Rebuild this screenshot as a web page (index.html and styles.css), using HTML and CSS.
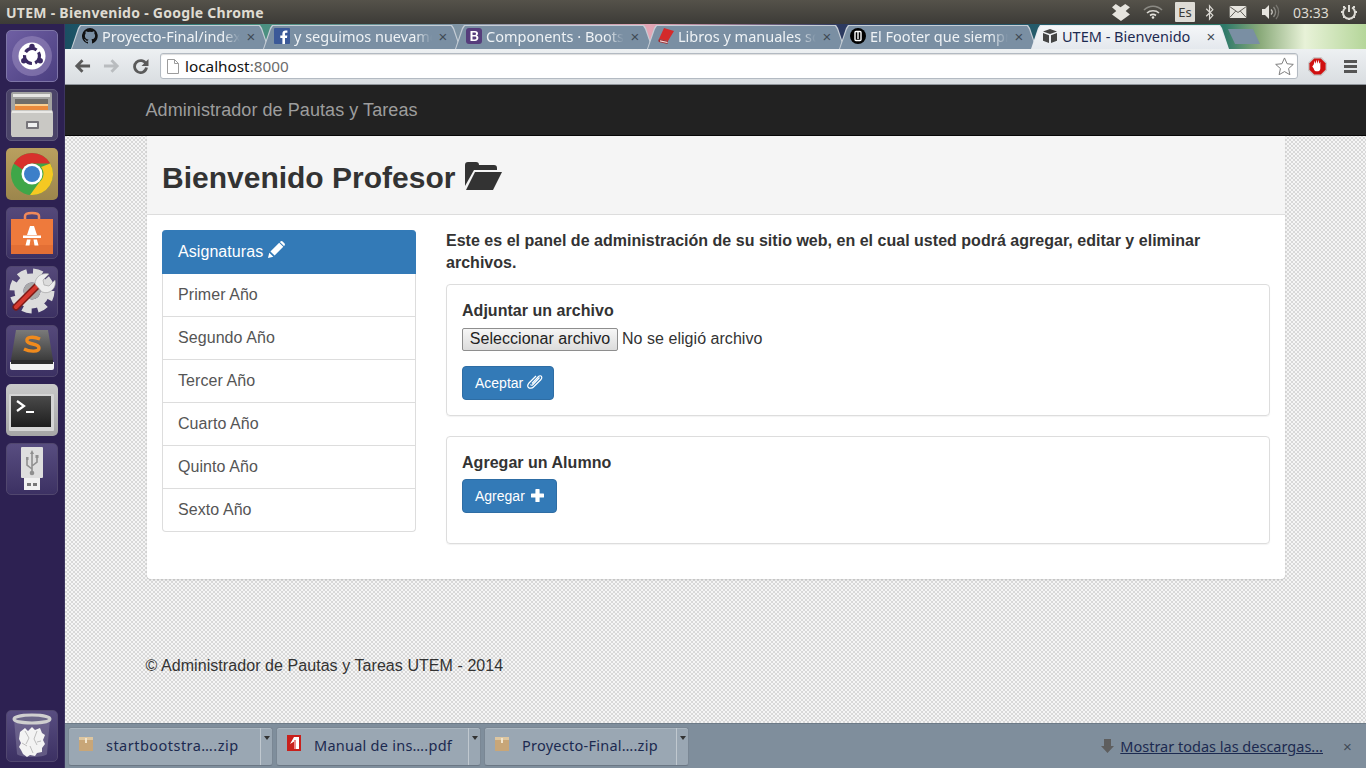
FILE: index.html
```html
<!DOCTYPE html>
<html lang="es">
<head>
<meta charset="utf-8">
<title>UTEM - Bienvenido</title>
<link rel="stylesheet" href="styles.css">
</head>
<body>
<header class="panel-top">
  <div class="win-title">UTEM - Bienvenido - Google Chrome</div>
  <div class="indicators">
    <svg class="ind ind-dropbox" viewBox="0 0 20 18"><path fill="#e6e4de" d="M5 0l5 3.500L15 0l5 3.500-4.500 4 4.500 3.500-4 3-5.500 4-5.500-4-4-3 4.500-3.500-4.500-4z"/></svg>
    <svg class="ind ind-wifi" viewBox="0 0 20 14"><g fill="none" stroke-width="1.600"><path stroke="#8b8a84" d="M1 5c5-5 13-5 18 0"/><path stroke="#d8d6d0" d="M4 8c3-3 9-3 12 0"/><path stroke="#e6e4de" d="M7 10.500c2-1.500 4-1.500 6 0"/></g><circle cx="10" cy="12.500" r="1.300" fill="#e6e4de"/></svg>
    <span class="ind-es">Es</span>
    <svg class="ind ind-bt" viewBox="0 0 10 18"><path fill="none" stroke="#dcdad4" stroke-width="1.300" d="M1 5l7 7-3.500 4V2L8 6l-7 7"/></svg>
    <svg class="ind ind-mail" viewBox="0 0 18 13"><rect width="18" height="13" rx="1" fill="#e6e4de"/><path fill="none" stroke="#55534d" d="M0.500 1l8.500 6 8.500-6M0.500 12l6-6.500M17.500 12l-6-6.500"/></svg>
    <svg class="ind ind-vol" viewBox="0 0 20 16"><path fill="#e6e4de" d="M1 5h3l4-4v14l-4-4H1z"/><g fill="none" stroke-width="1.300"><path stroke="#c8c6c0" d="M10 5.500c1.500 1.500 1.500 3.500 0 5"/><path stroke="#8b8a84" d="M12.500 3c2.500 3 2.500 7 0 10"/><path stroke="#77756f" d="M15 1c3.500 4 3.500 10 0 14"/></g></svg>
    <span class="clock">03:33</span>
    <svg class="ind ind-power" viewBox="0 0 16 16"><g fill="none" stroke="#dcdad4" stroke-width="2"><path d="M5 3.500a6 6 0 1 0 6 0"/><path d="M8 1v7"/></g><path fill="#dcdad4" d="M2 2h2v2H2zM12 2h2v2h-2zM0 7h2v2H0zM14 7h2v2h-2zM2 12h2v2H2zM12 12h2v2h-2zM7 14h2v2H7z"/></svg>
  </div>
</header>
<div class="desktop">
  <nav class="launcher">
    <div class="tile tile-dash"><svg viewBox="0 0 52 52"><circle cx="26" cy="26" r="20" fill="#9a8dc0" opacity=".55"/><circle cx="26" cy="26" r="13.500" fill="#fff"/><circle cx="26" cy="26" r="7.500" fill="none" stroke="#3b2a63" stroke-width="3.200" stroke-dasharray="12.500 3.200" transform="rotate(-30 26 26)"/><g fill="#3b2a63"><circle cx="26" cy="16.500" r="2.700"/><circle cx="17.800" cy="30.700" r="2.700"/><circle cx="34.200" cy="30.700" r="2.700"/></g></svg></div>
    <div class="tile tile-files"><svg viewBox="0 0 52 52"><rect x="5" y="3" width="41" height="20" rx="2" fill="#a3a3a1"/><rect x="7" y="5" width="37" height="3" fill="#e6e5e2"/><rect x="9" y="10" width="33" height="12" fill="#6f6d69"/><rect x="9" y="15" width="33" height="7" fill="#e98a3c"/><rect x="9" y="15" width="33" height="2" fill="#f7cf92"/><path fill="#c9c8c4" d="M6 21h40l1 2v23l-1 2H6l-1-2V23z"/><rect x="6" y="22" width="40" height="2" fill="#e9e8e5"/><rect x="20" y="32" width="13" height="8" rx="1" fill="#77757a"/><rect x="22" y="34" width="9" height="4" fill="#f1f1f1"/></svg></div>
    <div class="tile tile-chrome"><svg viewBox="0 0 52 52"><circle cx="26" cy="26" r="21" fill="#3fa648"/><path fill="#d8312c" d="M7.800 15.500A21 21 0 0 1 44.200 15.500H26a10.500 10.500 0 0 0-9.500 6z"/><path fill="#f5c822" d="M44.200 15.500A21 21 0 0 1 24 47l9.500-13a10.500 10.500 0 0 0 1.500-15z"/><circle cx="26" cy="26" r="10.500" fill="#fff"/><circle cx="26" cy="26" r="8" fill="#3d7fc9"/></svg></div>
    <div class="tile tile-plain"><svg viewBox="0 0 52 52"><path fill="none" stroke="#f0895a" stroke-width="2.500" d="M19 15v-6c0-4 14-4 14 0v6"/><path fill="#ee7a3c" d="M5 12h42v35H5z"/><rect x="5" y="38" width="42" height="9" fill="#e36f35"/><path fill="#fff" d="M24 19h4l3 9h-10zM17 28.500h18v2.500H17zM21 32.500h3.500l-1 6h-4zM27.500 32.500H31l1.500 6h-4z"/></svg></div>
    <div class="tile tile-plain"><svg viewBox="0 0 52 52"><circle cx="26" cy="25" r="19" fill="none" stroke="#dcdcdc" stroke-width="7" stroke-dasharray="9 6"/><circle cx="26" cy="25" r="13" fill="none" stroke="#dcdcdc" stroke-width="9"/><circle cx="26" cy="25" r="8.500" fill="#a9a9a9"/><path fill="none" stroke="#7d1a16" stroke-width="7" stroke-linecap="round" d="M10 41L32 19"/><path fill="none" stroke="#d5392f" stroke-width="4" stroke-linecap="round" d="M10 41L32 19"/><path fill="#ececec" stroke="#9a9a9a" stroke-width=".6" d="M29 18c0-7 7-12 14-10l-6 6 1 5 5 1 6-6c2 8-5 15-13 12z"/></svg></div>
    <div class="tile tile-plain"><svg viewBox="0 0 52 52"><defs><linearGradient id="subl" x1="0" y1="0" x2="0" y2="1"><stop offset="0" stop-color="#7a7a7a"/><stop offset="1" stop-color="#3c3c3c"/></linearGradient></defs><path fill="url(#subl)" d="M10 5h32l5 30H5z"/><path fill="#f2f2f2" d="M4 37h44v6q0 2-2 2H6q-2 0-2-2z"/><rect x="5" y="35" width="42" height="4" fill="#2d2d2d"/><path fill="none" stroke="#f08a1d" stroke-width="3.400" d="M34 14c-7-3-14-2-13 2 1 4 12 2 12 7 0 4-9 4-15 1"/></svg></div>
    <div class="tile tile-term"><svg viewBox="0 0 52 52"><defs><linearGradient id="term" x1="0" y1="0" x2="0" y2="1"><stop offset="0" stop-color="#4a4a4a"/><stop offset="1" stop-color="#1e1e1e"/></linearGradient></defs><rect x="3" y="10" width="45" height="37" rx="1" fill="#d5d5d5"/><rect x="5" y="12" width="40" height="31" fill="url(#term)"/><path fill="none" stroke="#fff" stroke-width="2.200" d="M11 17l7 5-7 5"/><rect x="20" y="27" width="8" height="2" fill="#fff"/></svg></div>
    <div class="tile tile-usb"><svg viewBox="0 0 52 52"><rect x="15" y="4" width="22" height="31" rx="1" fill="#dedede"/><rect x="18" y="35" width="16" height="12" fill="#f1f1f1"/><rect x="21" y="40" width="4" height="3" fill="#777"/><rect x="27" y="40" width="4" height="3" fill="#777"/><path fill="none" stroke="#8f8f8f" stroke-width="1.600" d="M26 9v19M26 26l-5-4v-5M26 23l5-4v-4"/><circle cx="26" cy="30" r="2.300" fill="#8f8f8f"/><path fill="#8f8f8f" d="M26 7l2 4h-4zM20 14h2.500v3H20zM29.500 12h3v3h-3z"/></svg></div>
    <div class="launcher-gap"></div>
    <div class="tile tile-usb"><svg viewBox="0 0 52 52"><path fill="#8d88a6" d="M8 9h36l-3 35c-2 4-28 4-30 0z" opacity=".45"/><ellipse cx="26" cy="9" rx="18" ry="4" fill="#6b6688" stroke="#cfcfcf" stroke-width="3"/><path fill="#f3f3f3" d="M14 22l5-4 3 3 4-4 3 3 5-2 2 5 3 2-2 5 2 4-3 4 0 4-5 1-2 3-5-1-3 2-4-3-2-4-2-3 2-4-2-4z"/><path fill="none" stroke="#bdbdbd" d="M19 21l4 7-3 6M31 21l-3 8 3 6M16 33l5 3M35 31l-4 1M24 36l3 7"/></svg></div>
  </nav>
  <div class="browser">
    <div class="tabstrip">
      <div class="tab"><svg class="fav" viewBox="0 0 16 16"><path fill="#111" d="M8 0a8 8 0 0 0-2.500 15.600c.4.100.5-.2.500-.4v-1.400c-2.200.5-2.700-1-2.700-1-.4-.9-.9-1.200-.9-1.200-.7-.5.100-.5.100-.5.800.1 1.200.8 1.200.8.700 1.200 1.900.9 2.300.7.100-.5.300-.9.500-1.100-1.800-.2-3.600-.9-3.600-4 0-.9.300-1.600.8-2.100-.1-.2-.4-1 .1-2.100 0 0 .7-.2 2.200.8a7.600 7.600 0 0 1 4 0c1.500-1 2.200-.8 2.200-.8.400 1.100.2 1.900.1 2.100.5.600.8 1.300.8 2.100 0 3.100-1.900 3.700-3.700 3.900.3.300.6.800.6 1.500v2.200c0 .2.100.5.500.4A8 8 0 0 0 8 0z"/></svg><span class="tab-label">Proyecto-Final/index</span><span class="tab-x">×</span></div>
      <div class="tab"><svg class="fav" viewBox="0 0 16 16"><rect width="16" height="16" rx="1" fill="#3b5998"/><path fill="#fff" d="M11 16v-6h2l.3-2.500H11V6c0-.7.300-1.200 1.200-1.200h1.200V2.600C13.200 2.500 12.500 2.500 11.600 2.500 9.700 2.500 8.400 3.600 8.400 5.700v1.800H6.300V10h2.100v6z"/></svg><span class="tab-label">y seguimos nuevame</span><span class="tab-x">×</span></div>
      <div class="tab"><svg class="fav" viewBox="0 0 16 16"><rect width="16" height="16" rx="3" fill="#563d7c"/><path fill="#fff" d="M4.500 3H9c2 0 3 1 3 2.400 0 1-.6 1.800-1.500 2.100 1.200.2 1.900 1.100 1.900 2.300C12.400 11.800 11 13 9 13H4.500zM6.500 4.600v2.400h2.100c.9 0 1.400-.4 1.400-1.200s-.5-1.200-1.400-1.200zM6.500 8.500v2.900h2.400c1 0 1.500-.5 1.500-1.400s-.5-1.500-1.500-1.500z"/></svg><span class="tab-label">Components · Boots</span><span class="tab-x">×</span></div>
      <div class="tab"><svg class="fav" viewBox="0 0 16 16"><path fill="#d42a2a" d="M6 0l10 3-6 10-9-2z"/><path fill="#a81c1c" d="M1 11l9 2-.5 3L1 14c-1-1-.8-2 0-3z" opacity=".85"/><path fill="#f4d8d8" d="M2 12.300l7.600 1.800-.3 1-7.300-1.700z"/></svg><span class="tab-label">Libros y manuales so</span><span class="tab-x">×</span></div>
      <div class="tab"><svg class="fav" viewBox="0 0 16 16"><circle cx="8" cy="8" r="8" fill="#000"/><rect x="5" y="3.500" width="6" height="9" rx="1" fill="none" stroke="#fff" stroke-width="1.400"/><path stroke="#fff" stroke-width="1.400" d="M8 3v8"/></svg><span class="tab-label">El Footer que siempr</span><span class="tab-x">×</span></div>
      <div class="tab tab-active"><svg class="fav" viewBox="0 0 16 16"><path fill="#444" d="M8 1l7 2.500L8 6 1 3.500zM1 5l6 2.200V15l-6-2.200zM15 5L9 7.200V15l6-2.200z"/></svg><span class="tab-label">UTEM - Bienvenido</span><span class="tab-x">×</span></div>
      <div class="tab-new"></div>
    </div>
    <div class="toolbar">
      <svg class="tool tool-back" viewBox="0 0 18 16"><path fill="none" stroke="#5a5a5a" stroke-width="3" d="M17 8H4M9 2L3 8l6 6"/></svg>
      <svg class="tool tool-fwd" viewBox="0 0 18 16"><path fill="none" stroke="#b9bcbf" stroke-width="3" d="M1 8h13M9 2l6 6-6 6"/></svg>
      <svg class="tool tool-reload" viewBox="0 0 16 16"><path fill="none" stroke="#5a5a5a" stroke-width="2.800" d="M13.500 6A6 6 0 1 0 14 9.500"/><path fill="#5a5a5a" d="M16 1v7H9z"/></svg>
      <div class="omnibox">
        <svg class="page-ic" viewBox="0 0 12 15"><path fill="#fff" stroke="#9c9c9c" d="M.5.500h7l4 4v10H.500z"/><path fill="none" stroke="#9c9c9c" d="M7.500.500v4h4"/></svg>
        <span class="url"><b>localhost</b>:8000</span>
        <svg class="star" viewBox="0 0 20 19"><path fill="#fff" stroke="#777" d="M10 1l2.700 6.100 6.600.7-5 4.400 1.400 6.500-5.700-3.300-5.700 3.300 1.400-6.500-5-4.400 6.600-.7z"/></svg>
      </div>
      <svg class="stop" viewBox="0 0 20 20"><path fill="#c9c9c9" d="M6 0h8l6 6v8l-6 6H6l-6-6V6z"/><path fill="#d01010" d="M6.500 1.500h7l5 5v7l-5 5h-7l-5-5v-7z"/><path fill="#fff" d="M6 8l1-4 1 3 1-4 1 4 1-4 1 4 1-2v7c0 2-1.500 3-3.500 3S6.500 14 6 12l-1.500-2z"/></svg>
      <div class="burger"><i></i><i></i><i></i></div>
    </div>
    <main class="page">
      <div class="navbar"><div class="container"><a class="brand">Administrador de Pautas y Tareas</a></div></div>
      <div class="container">
        <section class="card">
          <div class="card-head">
            <h1>Bienvenido Profesor <svg class="ic-folder" viewBox="0 0 37 28"><path fill="#333" d="M0 3q0-3 3-3h8q3 0 3 3h15q3 0 3 3v2H9L0 24z"/><path fill="#333" d="M10 10h27L28 28H1z"/></svg></h1>
          </div>
          <div class="card-body">
            <div class="list">
              <a class="list-item is-active">Asignaturas <svg class="ic-pencil" viewBox="0 0 16 16"><path fill="#fff" d="M0 16l1.200-5 3.800 3.800zM2.300 9.800L10.500 1.600l3.900 3.900-8.200 8.200zM11.500.6c.8-.8 1.800-.8 2.500 0l1.400 1.400c.7.700.7 1.700 0 2.400l-.4.400L11.100 1z"/></svg></a>
              <a class="list-item">Primer Año</a>
              <a class="list-item">Segundo Año</a>
              <a class="list-item">Tercer Año</a>
              <a class="list-item">Cuarto Año</a>
              <a class="list-item">Quinto Año</a>
              <a class="list-item">Sexto Año</a>
            </div>
            <div class="content">
              <p class="lead">Este es el panel de administración de su sitio web, en el cual usted podrá agregar, editar y eliminar archivos.</p>
              <div class="well well-file">
                <h2>Adjuntar un archivo</h2>
                <div class="file-row"><button class="file-btn">Seleccionar archivo</button><span>No se eligió archivo</span></div>
                <button class="btn btn-accept">Aceptar <svg class="ic-clip" viewBox="0 0 16 15"><path fill="none" stroke="#fff" stroke-width="1.200" d="M5 9.500l6.500-7c1-1 2.500-1 3 0s.3 2-.5 3l-7.500 7.500c-1.500 1.500-4 1.500-5 .5s-.8-3 .5-4.500L9 2"/><path fill="none" stroke="#fff" stroke-width="1.200" d="M3.500 10.500c.5 1 1.500 1 2.500 0l6.500-7"/></svg></button>
              </div>
              <div class="well well-add">
                <h2>Agregar un Alumno</h2>
                <button class="btn">Agregar <svg class="ic-plus" viewBox="0 0 13 13"><path fill="#fff" d="M5 0h3q.6 0 .6.600V4.400h3.800q.6 0 .6.600v3q0 .6-.6.600H8.600v3.800q0 .6-.6.600H5q-.6 0-.6-.6V8.600H.6Q0 8.600 0 8V5q0-.6.600-.6h3.800V.6Q4.400 0 5 0z"/></svg></button>
              </div>
            </div>
          </div>
        </section>
        <footer class="foot">© Administrador de Pautas y Tareas UTEM - 2014</footer>
      </div>
    </main>
    <div class="downloads">
      <div class="dl dl-first"><svg class="dl-ic" viewBox="0 0 16 15"><path fill="#c8a678" d="M1 1h14v14H1z"/><rect x="1" y="1" width="14" height="3" fill="#ddc6a0"/><rect x="7" y="2" width="2" height="5" fill="#f1e4cc"/></svg><span class="dl-name">startbootstra….zip</span><span class="dl-menu"></span></div>
      <div class="dl"><svg class="dl-ic dl-pdf" viewBox="0 0 14 16"><rect width="14" height="16" fill="#c8201c"/><path fill="#fff" d="M7 2h5v12H8V6L3 9z"/><rect x="7" y="5" width="2" height="9" fill="#e88"/></svg><span class="dl-name">Manual de ins….pdf</span><span class="dl-menu"></span></div>
      <div class="dl"><svg class="dl-ic" viewBox="0 0 16 15"><path fill="#c8a678" d="M1 1h14v14H1z"/><rect x="1" y="1" width="14" height="3" fill="#ddc6a0"/><rect x="7" y="2" width="2" height="5" fill="#f1e4cc"/></svg><span class="dl-name">Proyecto-Final….zip</span><span class="dl-menu"></span></div>
      <div class="dl-gap"></div>
      <svg class="dl-arrow" viewBox="0 0 13 14"><path fill="#5e5e5e" d="M3 0h7v7h3l-6.500 7L0 7h3z"/></svg>
      <a class="dl-all">Mostrar todas las descargas...</a>
      <span class="dl-close">×</span>
    </div>
  </div>
</div>
</body>
</html>
```

FILE: styles.css
```css
* { box-sizing: border-box; }
html, body { margin: 0; height: 100%; overflow: hidden; }
body { display: flex; flex-direction: column; width: 1366px; height: 768px; font-family: "Liberation Sans", Arial, sans-serif; color: #333; font-size: 16px; }

/* top panel */
.panel-top { height: 24px; flex: none; display: flex; align-items: center; justify-content: space-between; background: linear-gradient(#55524a, #3c3b37); padding-left: 6px; }
.win-title { font: 700 14px "Noto Sans", sans-serif; color: #dfdbd2; letter-spacing: .27px; }
.indicators { display: flex; align-items: center; height: 24px; width: 266px; }
.ind { flex: none; display: block; }
.ind-dropbox { width: 19px; height: 17px; margin-left: 11px; }
.ind-wifi { width: 20px; height: 14px; margin-left: 13px; }
.ind-es { width: 20px; height: 20px; margin-left: 12px; background: #dedcd6; color: #3c3b37; font: 13px/20px "Noto Sans", sans-serif; text-align: center; border-radius: 1px; }
.ind-bt { width: 10px; height: 17px; margin-left: 10px; }
.ind-mail { width: 18px; height: 12px; margin-left: 14px; }
.ind-vol { width: 20px; height: 16px; margin-left: 14px; }
.clock { font: 14px "Noto Sans", sans-serif; color: #dfdbd2; margin-left: 12px; }
.ind-power { width: 16px; height: 16px; margin-left: 12px; }

/* launcher */
.desktop { flex: 1; display: flex; min-height: 0; }
.launcher { width: 65px; flex: none; display: flex; flex-direction: column; gap: 7px; padding: 6px 0 6px 6px; background: #2d2152; border-right: 1px solid #3d3560; }
.launcher-gap { flex: 1; }
.tile { width: 52px; height: 52px; flex: none; border-radius: 5px; overflow: hidden; }
.tile svg { display: block; width: 52px; height: 52px; }
.tile-dash { background: linear-gradient(135deg, #6f5fa3, #4b3f80); border: 1px solid #7f76a8; }
.tile-dash svg, .tile-files svg { margin: -1px; }
.tile-files { background: #4a4368; border: 1px solid #5f587c; }
.tile-chrome { background: linear-gradient(#b9a05f, #9c864c); }
.tile-plain { background: linear-gradient(#55497a, #3c3163); border: 1px solid #51476f; }
.tile-plain svg { margin: -1px; }
.tile-term { background: linear-gradient(#c9c9c9, #a6a6a6); }
.tile-usb { background: linear-gradient(#584d80, #3c3163); border: 1px solid #51476f; }
.tile-usb svg { margin: -1px; }

/* browser */
.browser { flex: 1; min-width: 0; display: flex; flex-direction: column; }
.tabstrip { height: 25px; flex: none; display: flex; padding: 1px 0 0 6px; background: linear-gradient(90deg, #1b4f63 0, #1f6670 60px, #4a9080 195px, #7d93a3 390px, #e3a6b5 585px, #2d3a60 775px, #245a6a 965px, #2f7a6a 1160px, #8aaa7a 1195px, #e8f2d8 1240px, #b5d69a 100%); }
.tab { position: relative; width: 198px; flex: none; height: 24px; display: flex; align-items: center; margin-right: -6px; padding: 0 11px 2px; color: #eef2f5; background: #c6ced6; clip-path: polygon(0 100%, 7px 3px, 9px 0, 189px 0, 191px 3px, 198px 100%); }
.tab::before { content: ""; position: absolute; inset: 1px 1px 0 1px; background: #7a8fa3; clip-path: polygon(0 100%, 7px 3px, 9px 0, 187px 0, 189px 3px, 196px 100%); }
.tab > * { position: relative; }
.fav { width: 16px; height: 16px; flex: none; margin-right: 4px; }
.tab-label { flex: 1; min-width: 0; white-space: nowrap; overflow: hidden; font: 14.500px "Noto Sans", sans-serif; -webkit-mask-image: linear-gradient(90deg, #000 88%, transparent); mask-image: linear-gradient(90deg, #000 88%, transparent); }
.tab-x { width: 14px; flex: none; text-align: center; font: 15px "Liberation Sans", sans-serif; color: #3f4a55; margin-left: 4px; }
.tab-active { color: #1c2a50; background: #e6eaef; z-index: 1; }
.tab-active::before { background: linear-gradient(#f4f6f8, #e4e8ed); }
.tab-active .tab-label { -webkit-mask-image: none; mask-image: none; }
.tab-new { width: 32px; height: 15px; margin: 4px 0 0 5px; background: #7a8fa3; clip-path: polygon(0 0, 25px 0, 32px 100%, 7px 100%); }

.toolbar { height: 36px; flex: none; display: flex; align-items: center; padding: 4px 0 5px; background: linear-gradient(#edf0f2, #d9dde1); border-bottom: 1px solid #8f949a; }
.tool { width: 17px; height: 16px; flex: none; }
.tool-back { margin-left: 9px; }
.tool-fwd { margin-left: 12px; }
.tool-reload { margin-left: 12px; }
.omnibox { width: 1138px; height: 26px; flex: none; margin-left: 11px; display: flex; align-items: center; background: #fff; border: 1px solid #b3bac2; border-radius: 3px; padding: 0 3px 0 6px; box-shadow: inset 0 1px 1px #ddd; }
.page-ic { width: 12px; height: 15px; flex: none; }
.url { flex: 1; margin-left: 6px; font: 15.300px "Noto Sans", sans-serif; color: #6b6b6b; }
.url b { font-weight: 400; color: #111; }
.star { width: 19px; height: 18px; flex: none; }
.stop { width: 19px; height: 19px; flex: none; margin-left: 10px; }
.burger { width: 13px; flex: none; margin-left: 17px; display: flex; flex-direction: column; gap: 2px; }
.burger i { display: block; height: 3px; background: #555; }

/* page */
.page { flex: 1; min-height: 0; overflow: hidden; background-color: #e9e9e9; background-image: repeating-conic-gradient(#d8d8d8 0 25%, #f5f5f5 0 50%); background-size: 4px 4px; }
.navbar { height: 51px; background: #222; border-bottom: 1px solid #080808; }
.container { width: 1170px; margin: 0 auto; padding: 0 15px; }
.brand { display: block; font-size: 18px; line-height: 50px; color: #9d9d9d; letter-spacing: .07px; }
.card { margin: 0 .5px 0 1.5px; background: #fff; border-radius: 0 0 4px 4px; box-shadow: 0 1px 2px rgba(0,0,0,.12); }
.card-head { height: 79px; padding: 4px 15px 0; display: flex; align-items: center; background: #f5f5f5; border-bottom: 1px solid #ddd; }
h1 { margin: 0; font-size: 30px; font-weight: 700; line-height: 33px; color: #333; }
.ic-folder { width: 37px; height: 28px; margin-left: 1px; vertical-align: -2px; }
.card-body { display: flex; gap: 30px; padding: 15px 15px 35px; }
.list { width: 254px; flex: none; align-self: flex-start; letter-spacing: .07px; }
.list-item { display: block; height: 43px; padding: 0 15px; line-height: 42px; color: #555; background: #fff; border: 1px solid #ddd; border-top: 0; }
.list-item:last-child { border-radius: 0 0 4px 4px; }
.is-active { height: 44px; line-height: 44px; color: #fff; background: #337ab7; border-color: #337ab7; border-radius: 4px 4px 0 0; }
.ic-pencil { width: 17px; height: 17px; vertical-align: -1px; }
.content { flex: 1; min-width: 0; }
.lead { margin: 0 0 10px; font-weight: 700; line-height: 22px; width: 790px; letter-spacing: .02px; }
.well { border: 1px solid #ddd; border-radius: 4px; padding: 15px; box-shadow: 0 1px 1px rgba(0,0,0,.05); }
.well-file { height: 132px; margin-bottom: 20px; }
.well-add { height: 108px; }
h2 { margin: 0; font-size: 16px; font-weight: 700; line-height: 22px; color: #333; letter-spacing: .03px; }
.file-row { display: flex; align-items: center; gap: 4px; margin: 6px 0 15px; height: 23px; font-size: 16px; letter-spacing: .04px; }
.file-row span { padding-bottom: 1px; }
.file-btn { width: 156px; height: 23px; padding: 0 0 2px; font: 16px "Liberation Sans", sans-serif; letter-spacing: .04px; color: #222; background: linear-gradient(#f6f6f6, #dcdcdc); border: 1px solid #8e8e8e; border-radius: 2px; }
.btn { display: block; height: 34px; padding: 0 12px; font: 14px "Liberation Sans", sans-serif; color: #fff; background: #337ab7; border: 1px solid #2e6da4; border-radius: 4px; white-space: nowrap; }
.btn-accept { width: 92px; padding: 0 0 2px 12px; text-align: left; }
.well-add .btn { margin-top: 5px; }
.ic-clip { width: 16px; height: 15px; vertical-align: -1px; }
.ic-plus { width: 13px; height: 13px; margin-left: 2px; vertical-align: -1px; }
.foot { margin-top: 76px; line-height: 22px; color: #333; letter-spacing: .065px; }

/* downloads */
.downloads { height: 45px; flex: none; display: flex; align-items: center; padding: 0 13px 0 3px; background: #7f8e9c; border-top: 1px solid #6d7b88; }
.dl { width: 205px; height: 39px; flex: none; margin-right: 3px; display: flex; align-items: center; padding-left: 9px; background: #9aa7b3; border: 1px solid #7a8794; border-bottom-color: #6b7784; border-radius: 3px; box-shadow: inset 0 1px 0 #aab6c0; }
.dl-ic { width: 16px; height: 15px; flex: none; margin-bottom: 6px; }
.dl-pdf { width: 14px; height: 16px; margin-left: 1px; margin-right: 1px; }
.dl-name { flex: 1; margin-left: 12px; padding-bottom: 3px; font: 14.500px "Noto Sans", sans-serif; letter-spacing: .25px; color: #1c2a50; white-space: nowrap; }
.dl-first .dl-name { letter-spacing: .47px; }
.dl-menu { position: relative; width: 12px; height: 100%; flex: none; border-left: 1px solid #c0c8cf; }
.dl-menu::after { content: ""; position: absolute; left: 3px; top: 8px; border: 3px solid transparent; border-top: 4px solid #333; }
.dl-gap { flex: 1; }
.dl-arrow { width: 13px; height: 14px; flex: none; margin-right: 6px; }
.dl-all { font: 14.500px "Noto Sans", sans-serif; color: #1c2a50; text-decoration: underline; white-space: nowrap; }
.dl-close { width: 11px; margin-left: 19px; font: 15px "Liberation Sans", sans-serif; color: #3f4a55; text-align: center; }
```
